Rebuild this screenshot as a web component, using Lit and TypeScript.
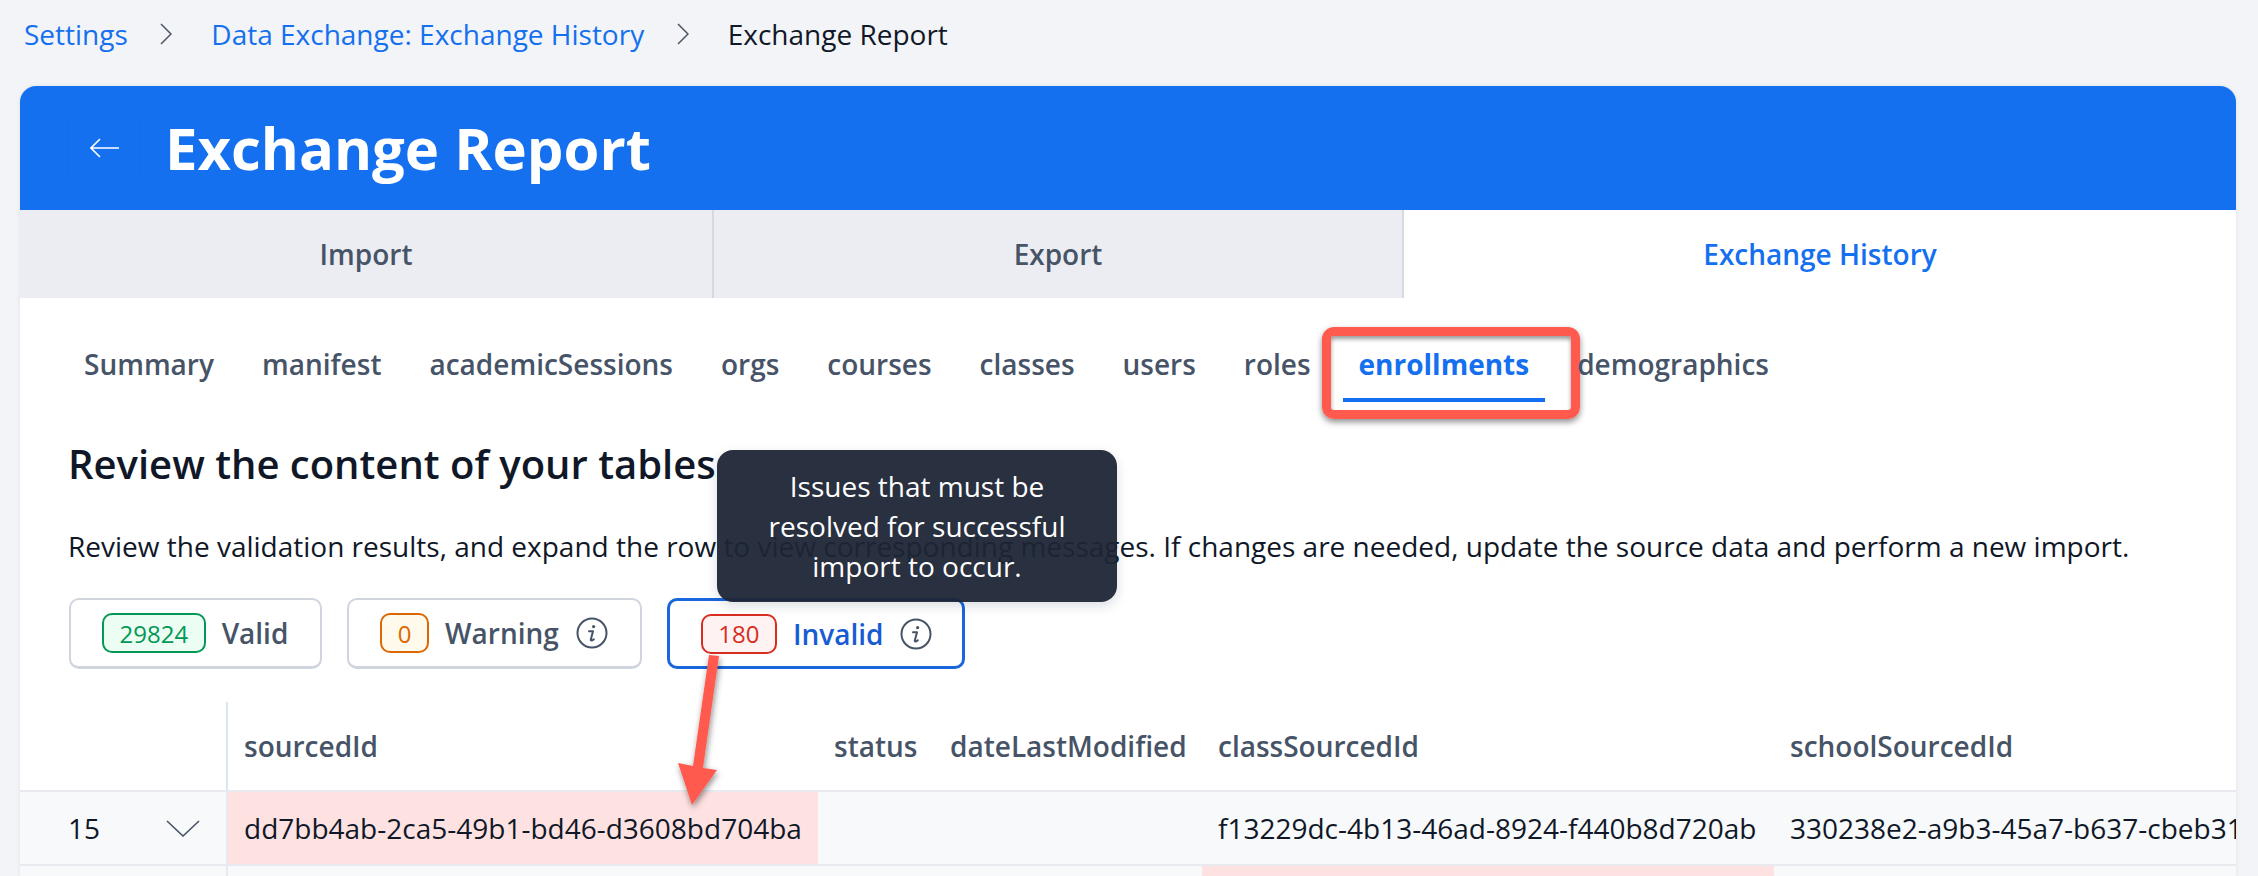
import { LitElement, html, css } from "lit";
import { customElement } from "lit/decorators.js";

const info = (color: string) => html`<svg class="info" viewBox="0 0 32 32" fill="none" stroke=${color} stroke-width="2" stroke-linecap="round" stroke-linejoin="round"><circle cx="16" cy="16" r="14.5"></circle><path d="M13 14.2h4L14.8 22.5c-.3 1.3 1 1.5 3-.3"></path><circle cx="17.6" cy="9.6" r="1.6" fill=${color} stroke="none"></circle></svg>`;
const chev = html`<svg class="crumb-chev" viewBox="0 0 12 22" fill="none" stroke="#4b5563" stroke-width="1.5"><path d="M1 1l10 10L1 21"></path></svg>`;

const subtabs = ["Summary","manifest","academicSessions","orgs","courses","classes","users","roles","enrollments","demographics"];

@customElement("app-root")
export class AppRoot extends LitElement {
  static styles = css`
    :host { display:block; width:2258px; height:876px; overflow:hidden; background:#f2f4f8; position:relative; font-family:"Open Sans",sans-serif; color:#111827; }
    .crumbs { height:86px; box-sizing:border-box; padding:0 0 18px 24px; display:flex; align-items:center; font-size:28px; }
    .crumbs a { color:#1570ef; }
    .crumb-chev { width:12px; height:22px; margin:0 39px 0 32.5px; }
    .crumbs span { color:#111827; }
    .card { margin:0 22px 0 20px; background:#fff; border-radius:16px 16px 0 0; box-shadow:0 0 4px rgba(17,24,39,.08); height:790px; overflow:hidden; position:relative; }
    .hero { height:124px; background:#1570ef; display:flex; align-items:center; color:#fff; padding-left:48px; }
    .back { width:72px; height:72px; box-sizing:border-box; border:1px solid rgba(0,0,0,.025); border-radius:12px; display:flex; align-items:center; justify-content:center; margin-right:25px; }
    .back svg { width:29px; height:20px; }
    .hero h1 { margin:0; font-size:58px; font-weight:700; line-height:1; }
    .tabs { display:grid; grid-template-columns:694px 690px 1fr; height:88px; }
    .tab { background:#ebedf2; display:flex; align-items:center; justify-content:center; font-size:28px; font-weight:600; color:#475467; border-right:2px solid #d5d9e0; }
    .tab.on { background:#fff; color:#1570ef; border:0; }
    .subtabs { display:flex; gap:16px; padding:32px 0 0 48px; }
    .sub { height:72px; padding:0 16px 5px; display:flex; align-items:center; position:relative; font-size:28px; font-weight:600; color:#475467; box-sizing:border-box; }
    .sub.on { color:#1570ef; font-weight:700; border-bottom:4px solid #1570ef; padding-bottom:1px; }
    .mark { position:absolute; left:-21px; right:-35px; top:-3px; bottom:-21px; border:9px solid #ff5a4d; border-radius:12px; box-shadow:0 3px 6px rgba(0,0,0,.45), inset 0 3px 4px rgba(0,0,0,.4); pointer-events:none; }
    h2 { margin:38px 0 0 48px; font-size:40px; font-weight:600; line-height:48px; color:#101828; }
    p { margin:38px 0 0 48px; font-size:28px; line-height:40px; color:#101828; white-space:nowrap; }
    .chips { display:flex; gap:25px; margin:32px 0 0 49px; }
    .chip { height:71px; box-sizing:border-box; border:2px solid #d0d5dd; border-bottom-width:3px; border-radius:10px; display:flex; align-items:center; padding:0 32px 0 31px; font-size:28px; font-weight:600; color:#475467; background:#fff; }
    .chip.on { border:3px solid #1a66dc; color:#175cd3; padding-right:30px; }
    .badge { height:40px; box-sizing:border-box; border:2px solid; border-radius:10px; display:flex; align-items:center; justify-content:center; font-size:24px; font-weight:400; margin-right:16px; padding:0 15.5px; }
    .g { color:#039855; border-color:#039855; background:#ecfdf3; }
    .o { color:#dc6803; border-color:#dc6803; background:#fffaeb; }
    .r { color:#d92d20; border-color:#d92d20; background:#fef3f2; }
    .info { width:32px; height:32px; margin-left:17px; }
    .chip.on .info { margin-left:16px; }
    .table { margin-top:33px; font-size:28px; }
    .row { display:grid; grid-template-columns:206px 2px 590px 116px 268px 572px 1fr; }
    .head { height:88px; align-items:center; font-weight:600; color:#475467; border-bottom:2px solid #e8eaef; }
    .body { height:72px; align-items:stretch; background:#f8f9fb; border-bottom:2px solid #e8eaef; color:#101828; }
    .rule { background:#dbe6f2; align-self:stretch; }
    .body .rule { background:#e8eaef; }
    .cell { padding:0 16px; display:flex; align-items:center; white-space:nowrap; overflow:hidden; }
    .bad { background:#fee2e2; }
    .idx { padding-left:48px; justify-content:space-between; padding-right:26px; }
    .idx svg { width:34px; height:17px; }
    .tip { position:absolute; left:717px; top:450px; width:400px; height:152px; box-sizing:border-box; padding:16px 24px; border-radius:16px; background:rgba(29,37,53,.95); box-shadow:0 4px 12px rgba(16,24,40,.15); color:#fff; font-size:28px; line-height:40px; text-align:center; }
    .arrow { position:absolute; left:0; top:0; width:2258px; height:876px; pointer-events:none; }
  `;
  render() {
    return html`
      <nav class="crumbs"><a>Settings</a>${chev}<a>Data Exchange: Exchange History</a>${chev}<span>Exchange Report</span></nav>
      <section class="card">
        <header class="hero">
          <div class="back"><svg viewBox="0 0 29 20" fill="none" stroke="#fff" stroke-width="1.6"><path d="M29 10H1M10 1L1 10l9 9"></path></svg></div>
          <h1>Exchange Report</h1>
        </header>
        <div class="tabs"><div class="tab">Import</div><div class="tab">Export</div><div class="tab on">Exchange History</div></div>
        <div class="subtabs">
          ${subtabs.map(s => html`<div class="sub ${s==="enrollments"?"on":""}">${s}${s==="enrollments"?html`<div class="mark"></div>`:""}</div>`)}
        </div>
        <h2>Review the content of your tables</h2>
        <p>Review the validation results, and expand the row to view corresponding messages. If changes are needed, update the source data and perform a new import.</p>
        <div class="chips">
          <div class="chip"><span class="badge g">29824</span>Valid</div>
          <div class="chip"><span class="badge o">0</span>Warning${info("#475467")}</div>
          <div class="chip on"><span class="badge r">180</span>Invalid${info("#475467")}</div>
        </div>
        <div class="table">
          <div class="row head"><div class="cell"></div><div class="rule"></div><div class="cell">sourcedId</div><div class="cell">status</div><div class="cell">dateLastModified</div><div class="cell">classSourcedId</div><div class="cell">schoolSourcedId</div></div>
          <div class="row body"><div class="cell idx">15<svg viewBox="0 0 34 17" fill="none" stroke="#475467" stroke-width="1.6"><path d="M1 1l16 15L33 1"></path></svg></div><div class="rule"></div><div class="cell bad">dd7bb4ab-2ca5-49b1-bd46-d3608bd704ba</div><div class="cell"></div><div class="cell"></div><div class="cell">f13229dc-4b13-46ad-8924-f440b8d720ab</div><div class="cell">330238e2-a9b3-45a7-b637-cbeb31</div></div>
          <div class="row body"><div class="cell"></div><div class="rule"></div><div class="cell"></div><div class="cell"></div><div class="cell"></div><div class="cell bad"></div><div class="cell"></div></div>
        </div>
      </section>
      <div class="tip">Issues that must be resolved for successful import to occur.</div>
      <svg class="arrow" viewBox="0 0 2258 876"><defs><filter id="s" x="-50%" y="-20%" width="200%" height="140%"><feDropShadow dx="1" dy="3" stdDeviation="3" flood-color="#000" flood-opacity=".45"></feDropShadow></filter></defs><path filter="url(#s)" fill="#ff5a4d" d="M709 655l10 1-16 112 14 2-25 35-14-42 15 3z"></path></svg>
    `;
  }
}
